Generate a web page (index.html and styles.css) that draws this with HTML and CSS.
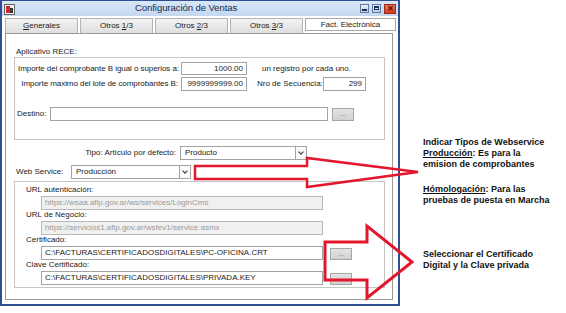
FILE: index.html
```html
<!DOCTYPE html>
<html>
<head>
    <title>Configuración de Ventas</title>
    <link rel="stylesheet" href="styles.css">
</head>
<body>
    <div class="page">
        <div class="window">
            <div class="titlebar">
                <svg class="app-icon" width="11" height="11" viewBox="0 0 11 11">
                    <rect x="0.5" y="0.5" width="10" height="10" fill="#f4f4f4" stroke="#666"/>
                    <rect x="2" y="2" width="4" height="7" fill="#d42a2a"/>
                    <rect x="6" y="4" width="3" height="5" fill="#3a3a3a"/>
                </svg>
                <span class="title">Configuración de Ventas</span>
                <div class="win-buttons">
                    <span class="wb wb-min"></span>
                    <span class="wb wb-max"></span>
                    <span class="wb wb-close">&#x2715;</span>
                </div>
            </div>
            <div class="tabs">
                <div class="tab"><u>G</u>enerales</div>
                <div class="tab">Otros <u>1</u>/3</div>
                <div class="tab">Otros <u>2</u>/3</div>
                <div class="tab">Otros <u>3</u>/3</div>
                <div class="tab active">Fact. Electrónica</div>
            </div>
            <div class="panel">
                <div class="group-title">Aplicativo RECE:</div>
                <div class="group rece">
                    <div class="row row-1">
                        <span class="lbl lbl-long">Importe del comprobante B igual o superios a:</span>
                        <div class="field num w-amount">1000.00</div>
                        <span class="lbl note">un registro por cada uno.</span>
                    </div>
                    <div class="row row-2">
                        <span class="lbl lbl-long">Importe maximo del lote de comprobantes B:</span>
                        <div class="field num w-amount">9999999999.00</div>
                        <span class="lbl seq-label">Nro de Secuencia:</span>
                        <div class="field num w-seq">299</div>
                    </div>
                    <div class="row row-dest">
                        <span class="lbl dest-label">Destino:</span>
                        <div class="field w-dest"></div>
                        <div class="dots">...</div>
                    </div>
                </div>

                <div class="row row-tipo">
                    <span class="lbl tipo-label">Tipo: Artículo por defecto:</span>
                    <div class="field combo w-tipo">Producto<span class="drop"></span></div>
                </div>
                <div class="row row-ws">
                    <span class="lbl ws-label">Web Service:</span>
                    <div class="field combo w-ws">Producción<span class="drop"></span></div>
                </div>

                <div class="group ws">
                    <div class="lbl sub-label">URL autenticación:</div>
                    <div class="sub-row">
                        <div class="field disabled w-url">https://wsaa.afip.gov.ar/ws/services/LoginCms</div>
                    </div>
                    <div class="lbl sub-label">URL de Negocio:</div>
                    <div class="sub-row">
                        <div class="field disabled w-url">https://servicios1.afip.gov.ar/wsfev1/service.asmx</div>
                    </div>
                    <div class="lbl sub-label">Certificado:</div>
                    <div class="sub-row">
                        <div class="field w-url">C:\FACTURAS\CERTIFICADOSDIGITALES\PC-OFICINA.CRT</div>
                        <div class="dots">...</div>
                    </div>
                    <div class="lbl sub-label">Clave Certificado:</div>
                    <div class="sub-row">
                        <div class="field w-url">C:\FACTURAS\CERTIFICADOSDIGITALES\PRIVADA.KEY</div>
                        <div class="dots"></div>
                    </div>
                </div>
            </div>
        </div>

        <div class="notes">
            <p class="note-block">
                Indicar Tipos de Webservice<br>
                <u>Producción</u>: Es para la<br>
                emision de comprobantes
            </p>
            <p class="note-block">
                <u>Hómologación</u>: Para las<br>
                pruebas de puesta en Marcha
            </p>
            <p class="note-block cert-note">
                Seleccionar el Certificado<br>
                Digital y la Clave privada
            </p>
        </div>
    </div>

    <!-- red arrows drawn over the screenshot -->
    <svg class="arrows" width="566" height="313" viewBox="0 0 566 313">
        <polygon points="195,166 307,166 307,158 418,172 307,187 307,179 195,179"
                 fill="none" stroke="#e3162b" stroke-width="2.5" stroke-linejoin="miter"/>
        <polygon points="325,242 367,242 367,226 412,262 367,298 367,280 325,280"
                 fill="none" stroke="#e3162b" stroke-width="3" stroke-linejoin="miter"/>
    </svg>
</body>
</html>
```

FILE: styles.css
```css
* {
    box-sizing: border-box;
}

body {
    margin: 0;
    background-color: #fff;
    font-family: "Liberation Sans", Arial, sans-serif;
    font-size: 8px;
    color: #1a1a1a;
    position: relative;
    width: 566px;
    height: 313px;
    overflow: hidden;
}

.page {
    display: flex;
    flex-direction: row;
    align-items: flex-start;
}

/* ---- window ---- */

.window {
    width: 400px;
    height: 306px;
    border: 2px solid #2f4f94;
    border-top-width: 1px;
    background-color: #fff;
    display: flex;
    flex-direction: column;
}

.titlebar {
    height: 15px;
    background: linear-gradient(#d9e7f7, #c3d7ef);
    display: flex;
    align-items: center;
    padding: 0 2px 0 2px;
    position: relative;
}

.app-icon {
    display: block;
    margin-top: 1px;
}

.title {
    position: absolute;
    left: 133px;
    top: 1px;
    font-size: 9.6px;
    letter-spacing: -0.1px;
    color: #1b2a4a;
}

.win-buttons {
    margin-left: auto;
    display: flex;
    gap: 3px;
    align-items: center;
}

.wb {
    width: 9px;
    height: 9px;
    border: 1px solid #5d7aa8;
    background: linear-gradient(#e9f1fb, #b9cde8);
    position: relative;
}

.wb-min:after {
    content: "";
    position: absolute;
    left: 1px;
    right: 1px;
    bottom: 1px;
    height: 2px;
    background-color: #1d2f55;
}

.wb-max:after {
    content: "";
    position: absolute;
    left: 1px;
    right: 1px;
    top: 1px;
    bottom: 2px;
    border: 1px solid #1d2f55;
    border-top-width: 2px;
}

.wb-close {
    width: 12px;
    height: 10px;
    border-color: #9c2a1a;
    background: linear-gradient(#f0775a, #d2391f);
    color: #4a0e06;
    font-size: 8px;
    line-height: 8px;
    text-align: center;
    font-weight: bold;
}

/* ---- tabs ---- */

.tabs {
    display: flex;
    gap: 2px;
    margin-top: 2px;
    padding-left: 3px;
    height: 15px;
    align-items: flex-start;
}

.tab {
    width: 73px;
    height: 15px;
    background: linear-gradient(#f3f3f3, #dedede);
    border: 1px solid #b4b4b4;
    border-bottom: none;
    text-align: center;
    line-height: 13px;
    font-size: 8px;
    color: #222;
}

.tab.active {
    width: 91px;
    height: 13px;
    margin-top: 0;
    background: #fff;
    border: 1px solid #a8a8a8;
    line-height: 11px;
}

/* ---- panel ---- */

.panel {
    margin-left: 3px;
    width: 388px;
    height: 267px;
    border: 1px solid #9a9a9a;
    padding: 0 7px 0 8px;
    display: flex;
    flex-direction: column;
}

.group-title {
    margin-top: 13px;
    padding-left: 2px;
    height: 10px;
    line-height: 10px;
}

.group {
    border: 1px solid #c6c6c6;
    width: 371px;
}

.rece {
    height: 83px;
    padding: 4px 0 0 3px;
}

.row {
    display: flex;
    align-items: center;
}

.lbl {
    white-space: nowrap;
    line-height: 10px;
}

.field {
    height: 14px;
    border: 1px solid #a3a3a3;
    background-color: #fff;
    line-height: 12px;
    padding: 0 3px;
    white-space: nowrap;
    overflow: hidden;
    position: relative;
}

.field.num {
    text-align: right;
}

.field.disabled {
    background-color: #f0f0f0;
    border-color: #b8b8b8;
    color: #9a9a9a;
}

.row-1 .field {
    height: 13px;
}

.row-2 {
    margin-top: 2px;
}

.lbl-long {
    width: 160px;
    text-align: right;
    margin-right: 3px;
    letter-spacing: -0.06px;
}

.w-amount {
    width: 66px;
}

.note {
    margin-left: 15px;
}

.seq-label {
    margin-left: 10px;
    width: 61px;
    margin-right: 5px;
}

.w-seq {
    width: 43px;
}

.row-dest {
    margin-top: 16px;
    margin-left: -1px;
}

.dest-label {
    width: 33px;
}

.w-dest {
    width: 278px;
}

.dots {
    width: 22px;
    height: 13px;
    margin-left: 4px;
    background: linear-gradient(#e4e4e4, #d0d0d0);
    border: 1px solid #a6a6a6;
    color: #777;
    text-align: center;
    line-height: 9px;
    font-size: 7px;
}

.row-tipo {
    margin-top: 6px;
}

.tipo-label {
    width: 162px;
    text-align: right;
    margin-right: 4px;
}

.w-tipo {
    width: 127px;
}

.row-ws {
    margin-top: 5px;
}

.ws-label {
    width: 57px;
    padding-left: 2px;
}

.w-ws {
    width: 120px;
}

.combo {
    padding-left: 4px;
}

.drop {
    position: absolute;
    right: 0;
    top: 0;
    width: 11px;
    height: 12px;
    border-left: 1px solid #a3a3a3;
    background-color: #fafafa;
}

.drop:after {
    content: "";
    position: absolute;
    left: 3px;
    top: 3px;
    width: 3px;
    height: 3px;
    border-right: 1px solid #333;
    border-bottom: 1px solid #333;
    transform: rotate(45deg);
}

.ws {
    margin-top: 2px;
    height: 107px;
    padding: 3px 0 0 11px;
}

.sub-label {
    height: 10px;
}

.sub-row {
    display: flex;
    align-items: flex-end;
    margin: 1px 0 0 15px;
}

.w-url {
    width: 282px;
}

.sub-row .dots {
    margin-left: 7px;
    height: 12px;
}

/* ---- annotations ---- */

.notes {
    padding: 137px 0 0 23px;
    font-family: "Liberation Sans", Arial, sans-serif;
    font-weight: bold;
    font-size: 9px;
    line-height: 11px;
    color: #111;
}

.note-block {
    margin: 0 0 14px 0;
}

.cert-note {
    margin-top: 43px;
}

.arrows {
    position: absolute;
    left: 0;
    top: 0;
    pointer-events: none;
}
```
